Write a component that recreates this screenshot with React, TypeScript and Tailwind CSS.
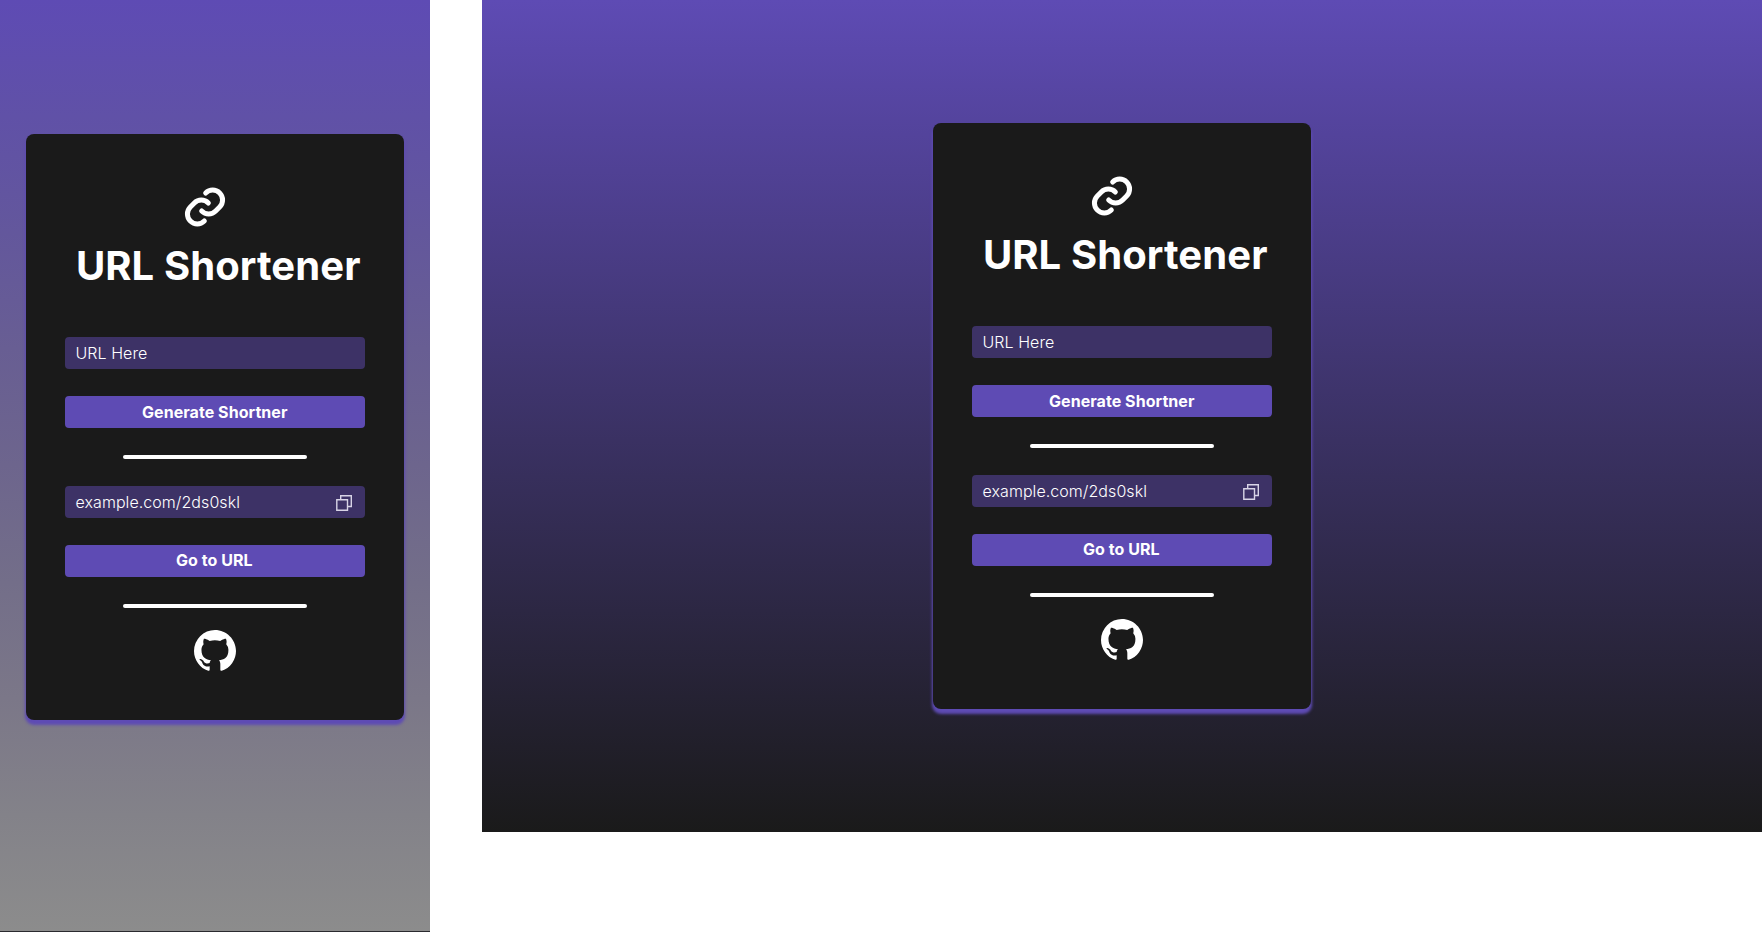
import { VscGithubInverted } from "react-icons/vsc";

function LinkIcon() {
  return (
    <svg className="size-[50px]" viewBox="0 0 150 150" fill="none" stroke="currentColor" strokeWidth="15" strokeLinecap="round">
      <path d="M77 33A29.6 29.6 0 0 1 119 75L107 87A29.6 29.6 0 0 1 65 87" />
      <path d="M73 117A29.6 29.6 0 0 1 31 75L43 63A29.6 29.6 0 0 1 85 63" />
    </svg>
  );
}

function CopyIcon() {
  return (
    <svg className="size-4 translate-y-px" viewBox="0 0 16 16" fill="none" stroke="#d8d4e6" strokeWidth="1.4">
      <path d="M0.8 4.7H11.5V15.3H0.8Z" />
      <path d="M4.7 4.7V0.8H15.3V11.5H11.5" />
    </svg>
  );
}

function Divider() {
  return <div className="h-1 w-[184px] shrink-0 rounded-[2px] bg-white" />;
}

function Field({ text, copy }: { text: string; copy?: boolean }) {
  return (
    <div className="flex h-8 w-[300px] shrink-0 items-center justify-between rounded-[4px] bg-[#3d3266] pr-[13px] pl-[10.5px] text-base font-light tracking-[0.06px] text-white">
      <span>{text}</span>
      {copy && <CopyIcon />}
    </div>
  );
}

function Action({ text, raised }: { text: string; raised?: boolean }) {
  return (
    <button
      className={
        "h-8 w-[300px] shrink-0 rounded-[4px] bg-[#5e4bb4] text-base font-bold tracking-[0.05px] text-white " +
        (raised ? "pr-[1.5px] pb-[2px] leading-[30px]" : "pr-[0.5px] leading-8")
      }
    >
      {text}
    </button>
  );
}

function Card() {
  return (
    <div className="flex h-[586px] w-[378px] flex-col items-center rounded-lg bg-[#1a1a1a] pt-12 text-white shadow-[0_4px_3px_1px_#5e4bb4]">
      <div className="mr-5">
        <LinkIcon />
      </div>
      <h1 className="mt-[10px] ml-[6.5px] text-[40px] leading-12 font-bold tracking-[0.1px]">URL Shortener</h1>
      <div className="mt-[47px] flex flex-col items-center gap-[27px]">
        <Field text="URL Here" />
        <Action text="Generate Shortner" />
        <Divider />
        <Field text="example.com/2ds0skl" copy />
        <Action text="Go to URL" raised />
        <Divider />
      </div>
      <VscGithubInverted className="mt-[22px] size-[42px]" />
    </div>
  );
}

export default function App() {
  return (
    <main className="flex h-[932px] w-[1762px] items-start gap-[52px] overflow-hidden bg-white font-['Inter',sans-serif]">
      <section className="flex h-[932px] w-[430px] justify-center border-b border-[#2a2a2e] bg-[linear-gradient(180deg,#5e4bb4_0%,#6051a7_12.5%,#63579c_25%,#685e93_37.5%,#6d658d_50%,#736e89_62.5%,#7b7788_75%,#838289_87.5%,#8c8c8c_100%)] pt-[134px]">
        <Card />
      </section>
      <section className="flex h-[832px] w-[1280px] items-center justify-center bg-[linear-gradient(180deg,#5e4bb4,#1a1a1a)]">
        <Card />
      </section>
    </main>
  );
}
